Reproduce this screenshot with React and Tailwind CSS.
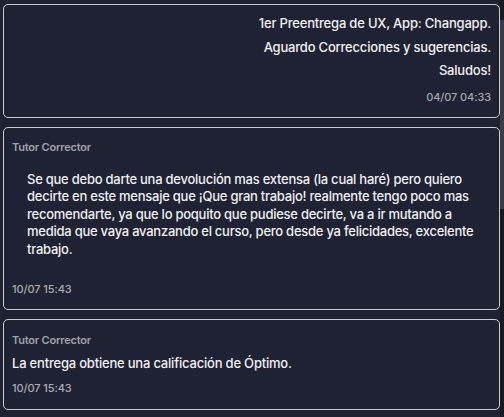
export default function App() {
  return (
    <div className="flex h-[417px] w-full overflow-hidden bg-[#1f2232] font-['Inter',sans-serif]">
      <div className="flex flex-1 flex-col gap-[9px] pl-[3px] pt-[4px]">
        <div className="rounded-[5px] border border-[#c9cacf] px-[8px] pt-[7px] pb-[12px] text-right">
          <p className="text-[13px] font-medium leading-[23.5px] tracking-[-0.2px] text-[#f0f0f3]">1er Preentrega de UX, App: Changapp. </p>
          <p className="text-[13px] font-medium leading-[23.5px] tracking-[-0.2px] text-[#f0f0f3]">Aguardo Correcciones y sugerencias.</p>
          <p className="text-[13px] font-medium leading-[23.5px] tracking-[-0.2px] text-[#f0f0f3]">Saludos!</p>
          <p className="mt-[6px] text-[11px] font-medium leading-[16px] tracking-[-0.1px] text-[#a3a5ac]">04/07 04:33</p>
        </div>

        <div className="rounded-[5px] border border-[#c9cacf] px-[8px] pt-[11px] pb-[12px]">
          <p className="text-[11px] font-semibold leading-[16px] tracking-[-0.2px] text-[#9fa1a9]">Tutor Corrector</p>
          <p className="mt-[16px] pl-[15px] pr-[10px] text-[13px] font-medium leading-[17.5px] tracking-[-0.25px] text-[#f0f0f3]">
            Se que debo darte una devolución mas extensa (la cual haré) pero quiero decirte en este mensaje que ¡Que gran trabajo! realmente tengo poco mas recomendarte, ya que lo poquito que pudiese decirte, va a ir mutando a medida que vaya avanzando el curso, pero desde ya felicidades, excelente trabajo.
          </p>
          <p className="mt-[23px] text-[11px] font-medium leading-[16px] tracking-[-0.1px] text-[#a9abb2]">10/07 15:43</p>
        </div>

        <div className="rounded-[5px] border border-[#c9cacf] px-[8px] pt-[12px] pb-[13px]">
          <p className="text-[11px] font-semibold leading-[16px] tracking-[-0.2px] text-[#9fa1a9]">Tutor Corrector</p>
          <p className="mt-[6.5px] text-[13px] font-medium leading-[17.5px] tracking-[-0.2px] text-[#f0f0f3]">La entrega obtiene una calificación de Óptimo.</p>
          <p className="mt-[8px] text-[11px] font-medium leading-[16px] tracking-[-0.1px] text-[#a9abb2]">10/07 15:43</p>
        </div>
      </div>
      <div className="w-[4px] bg-[#18191b]">
        <div className="mt-[20px] h-[189px] bg-[#3a3c41]" />
      </div>
    </div>
  );
}
